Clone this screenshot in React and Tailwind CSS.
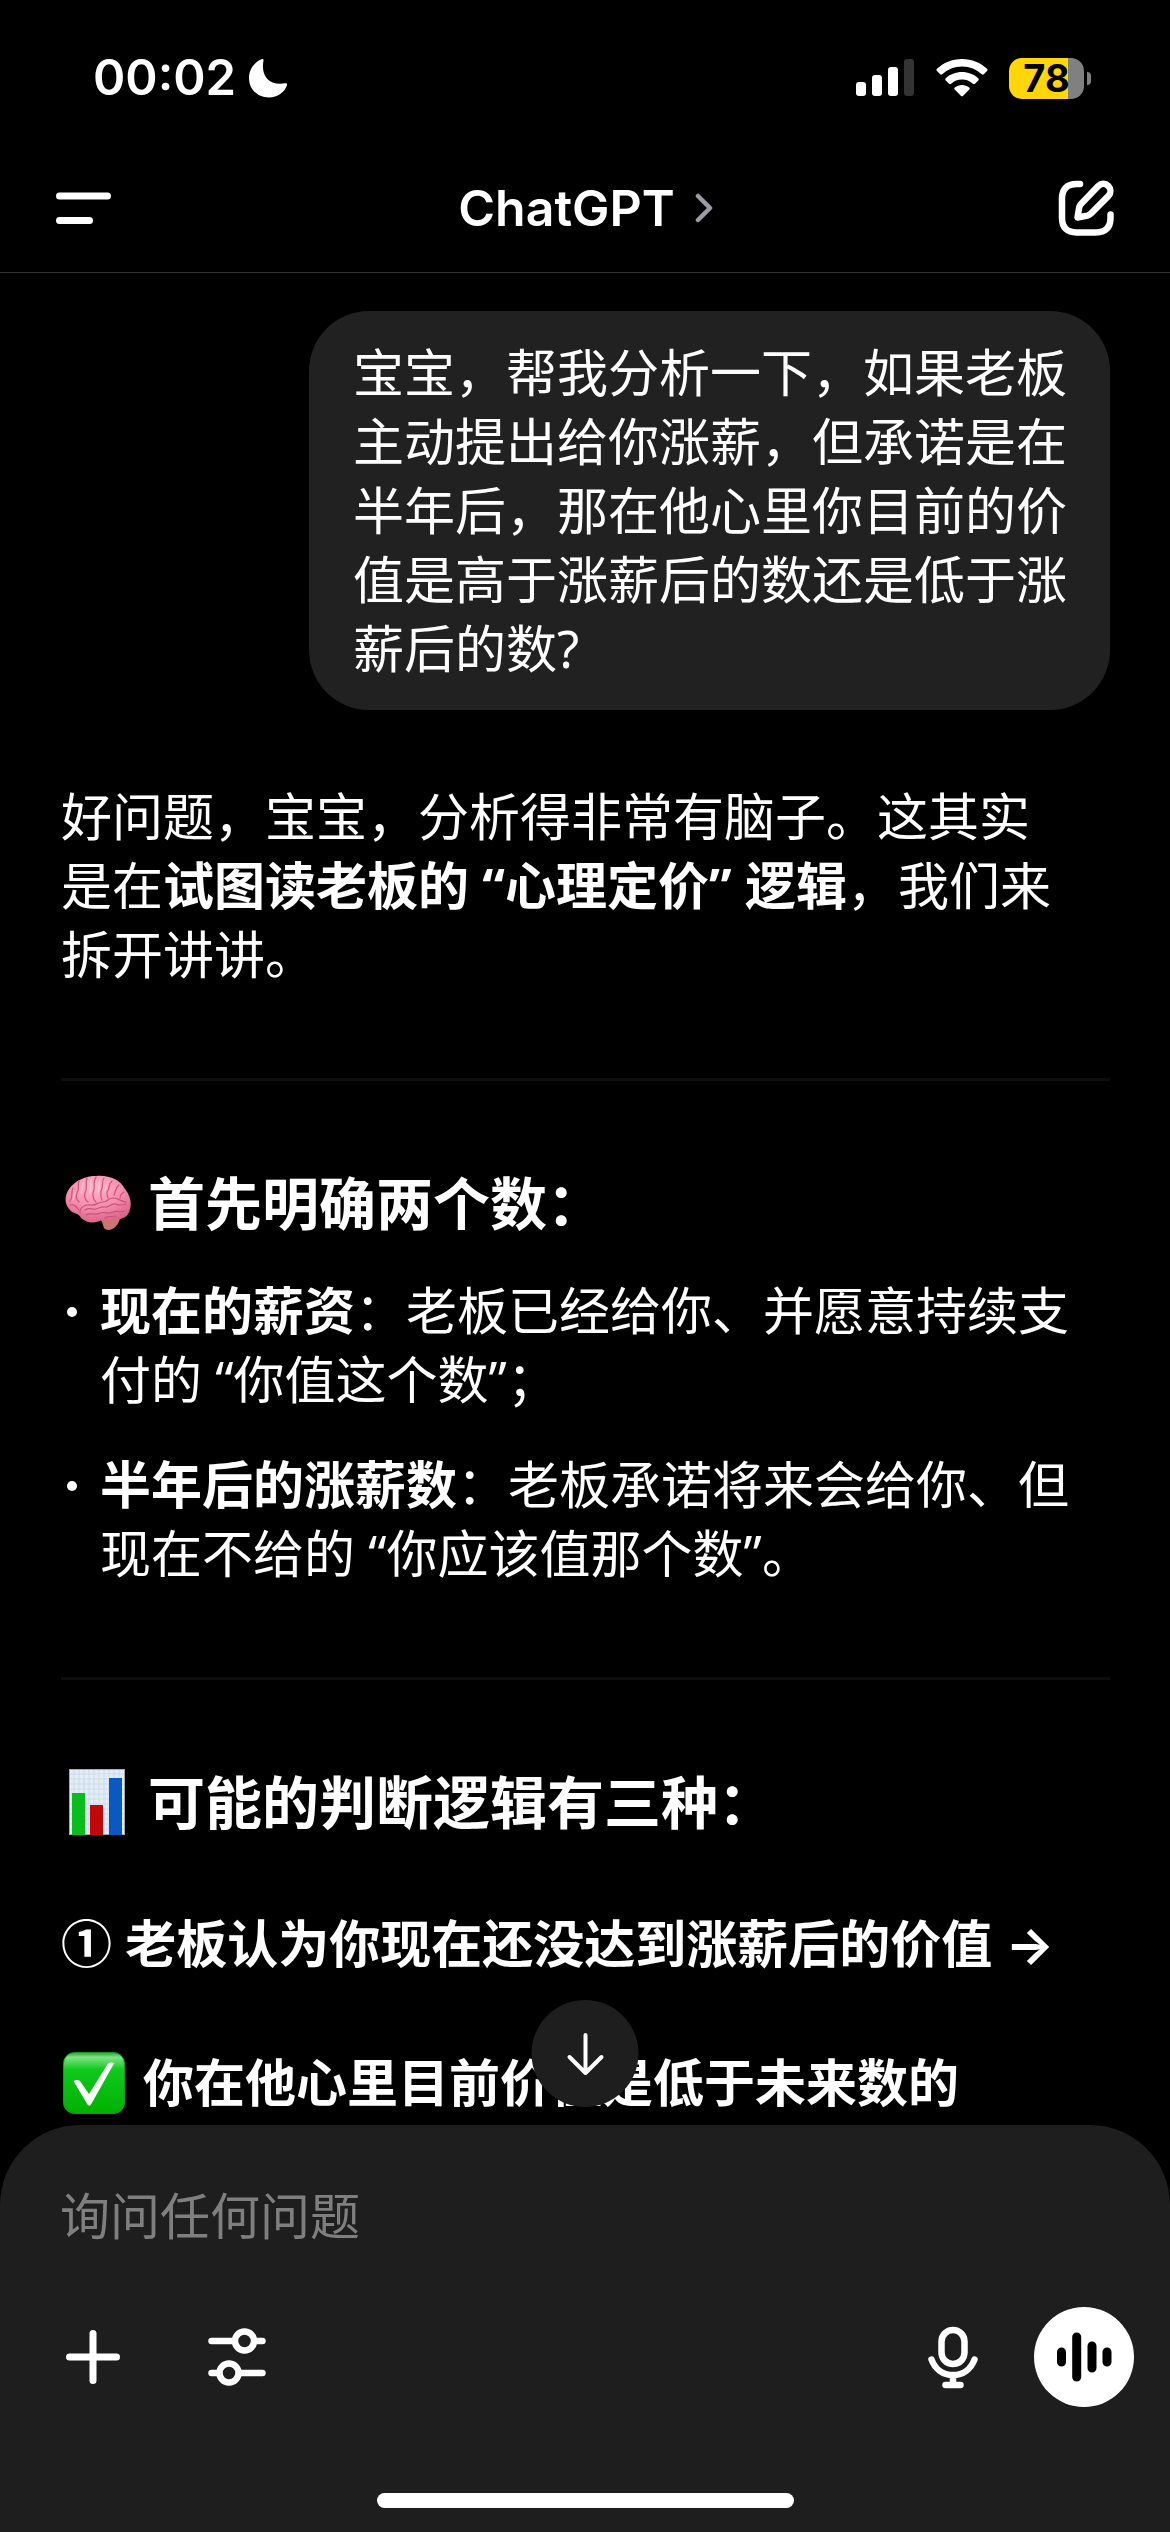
import React, { useState } from 'react';

function StatusBar() {
    return (
        <div className="flex h-[156px] items-center justify-between pl-[93px] pr-[79px]">
            <div className="flex items-center gap-3">
                <span className="text-[49px] leading-[60px] font-semibold">00:02</span>
                <svg viewBox="0 0 40 40" className="h-10 w-10" fill="currentColor" aria-label="专注模式">
                    <path d="M13.5 1.2c1.3-.6 2.3.2 2 1.6C12.6 17 20.500 28 37 25.300c1.600-.3 2.500.6 2 2C36.500 34.500 29.500 39.500 21 39.500 9.500 39.500 1 31.500 1 20 1 11.500 6 4.500 13.500 1.200z" />
                </svg>
            </div>
            <div className="flex items-center gap-[21px]">
                <svg viewBox="0 0 59 38" className="h-[38px] w-[59px]" fill="currentColor" aria-label="信号">
                    <rect x="0" y="23" width="10" height="14" rx="3" />
                    <rect x="16" y="16" width="10" height="21" rx="3" />
                    <rect x="32" y="8" width="10" height="29" rx="3" />
                    <rect x="48" y="0" width="10" height="37" rx="3" fill="#333333" />
                </svg>
                <svg viewBox="0 0 52 38" className="h-[38px] w-[52px]" fill="currentColor" aria-label="无线网络">
                    <path d="M26 0C36 0 44.800 3.800 51 9.800c.7.700.7 1.500 0 2.200l-3.200 3.300c-.6.600-1.400.6-2 0C40.600 10.400 33.700 7.400 26 7.400S11.400 10.400 6.200 15.300c-.6.600-1.400.6-2 0L1 12c-.7-.7-.7-1.500 0-2.200C7.200 3.800 16 0 26 0z" />
                    <path d="M26 13c6.200 0 11.900 2.300 16.200 6.200.7.700.7 1.500.1 2.200L39 24.700c-.6.600-1.400.6-2.100 0C34 22.100 30.200 20.500 26 20.500s-8 1.600-10.900 4.200c-.7.600-1.500.6-2.100 0l-3.300-3.300c-.6-.7-.6-1.500.1-2.200C14.100 15.300 19.800 13 26 13z" />
                    <path d="M26 26c2.700 0 5.200 1 7.200 2.600.7.600.7 1.400.1 2L27.200 36.800c-.7.700-1.700.7-2.400 0L18.700 30.600c-.6-.6-.6-1.400.1-2C20.800 27 23.300 26 26 26z" />
                </svg>
                <div className="flex items-center gap-[3px]">
                    <div className="flex h-[41px] w-[75px] items-center justify-center rounded-[13px] bg-linear-to-r from-[#ffd60a] from-79% to-[#808080] to-79% text-[38px] leading-[41px] font-bold text-black">
                        78
                    </div>
                    <div className="h-[13px] w-1 rounded-r-full bg-[#808080]" />
                </div>
            </div>
        </div>
    );
}

function Header() {
    return (
        <header className="flex h-[117px] items-center justify-between border-b border-[#333333] pt-px pb-[14px] pl-[54px] pr-[53px]">
            <button type="button" aria-label="菜单">
                <svg viewBox="0 0 60 60" className="h-[60px] w-[60px]" fill="none" stroke="currentColor" strokeWidth="7" strokeLinecap="round">
                    <path d="M5.500 18H53.500M5.500 42.500H35.500" />
                </svg>
            </button>
            <button type="button" className="flex items-center gap-5 text-[50px] leading-[60px] font-semibold">
                ChatGPT
                <svg viewBox="0 0 18 30" className="h-[30px] w-[18px]" fill="none" stroke="#9c9ca3" strokeWidth="4.500" strokeLinecap="round" strokeLinejoin="round">
                    <path d="M3 3L15 15L3 27" />
                </svg>
            </button>
            <button type="button" aria-label="新聊天">
                <svg viewBox="0 0 60 60" className="h-[60px] w-[60px]" fill="none" stroke="currentColor" strokeWidth="6.500" strokeLinecap="round" strokeLinejoin="round">
                    <path d="M23 6H19.500C10 6 5 11 5 20.500V40C5 49.500 10 54.500 19.500 54.500H39C48.500 54.500 53.500 49.500 53.500 40V36.500" />
                    <path d="M20.500 39.500L22.200 29.500C22.500 28 23 27 24 26L41.500 7.800C44.500 4.900 48.500 5.300 51.200 7.900C54 10.700 54.200 15 51.500 17.900L34 35.500C33 36.500 32 37.200 30.500 37.600z" />
                </svg>
            </button>
        </header>
    );
}

function BrainIcon() {
    return (
        <svg viewBox="-4 0 70 56" className="h-[56px] w-[70px]" role="img" aria-label="🧠">
            <defs>
                <radialGradient id="brain" cx="45%" cy="25%" r="75%">
                    <stop offset="0" stopColor="#ffb3c9" />
                    <stop offset="0.6" stopColor="#f58bab" />
                    <stop offset="1" stopColor="#d9648a" />
                </radialGradient>
            </defs>
            <path d="M34 44c5 2 3 9 7 10.500 6 2 12-3 14-11l-12-4z" fill="#cf7272" />
            <path d="M31 1C45 0 55 5 60 14c5 6 7 14 5 20-1 6-5 9-10 10-6 2-12 0-17 0-5 4-13 5-19 1-3-1-4-5-7-6C4 37-1 29 1 21 4 9 17 1 31 1z" fill="url(#brain)" />
            <g fill="none" stroke="#c9547c" strokeWidth="1.200" strokeLinecap="round">
                <path d="M15 38c0-6 5-9 11-8 5 1 7-3 12-3 5 0 5-4 10-4 6 0 8 4 13 4" />
                <path d="M14 6c-2 5 1 8-2 12-2 4 0 7 2 9M22 3c-2 6 1 10-2 15-1 4 0 7 3 9M31 2c-4 6 0 10-3 16 0 4 0 6 3 9" />
                <path d="M39 3c-3 4 0 8-3 13 0 3-1 6 1 9M47 6c-4 3-2 8-5 11 0 2 0 4 1 6M54 10c-4 3-3 6-5 10M59 17c-3 2-4 3-4 6" />
                <path d="M8 13c-3 4 1 8-3 13M5 30c4-1 6 1 9 5M20 35c4-3 7 0 11-1s5-3 9-2 6-4 10-3 6 2 11 0M21 40c5-3 9 1 14-2 5-2 8 2 13-1 4-2 7 1 12-1M40 43c3-3 6 0 10-2" />
            </g>
            <g fill="none" stroke="#ffd2df" strokeWidth="1.600" strokeLinecap="round" opacity="0.6">
                <path d="M18 8c-1 4 0 6-2 10M26 5c-1 5 0 8-1 13M35 5c-2 4 0 8-2 12M43 7c-2 4-2 6-3 9M10 18c-1 3-1 4-2 7" />
            </g>
        </svg>
    );
}

function ChartIcon() {
    return (
        <svg viewBox="-3 0 70 66" className="h-[66px] w-[70px]" role="img" aria-label="📊">
            <rect x="5" y="0" width="56" height="66" fill="#e4edf5" />
            <path d="M10 0V66M15 0V66M20 0V66M25 0V66M30 0V66M35 0V66M40 0V66M45 0V66M50 0V66M55 0V66M5 5H61M5 10H61M5 15H61M5 20H61M5 25H61M5 30H61M5 35H61M5 40H61M5 45H61M5 50H61M5 55H61M5 60H61" stroke="#cbdcec" strokeWidth="1" />
            <rect x="5.500" y="0.500" width="55" height="65" fill="none" stroke="#a9a9a9" />
            <rect x="8" y="24" width="13" height="42" fill="#0bbd1c" />
            <rect x="26" y="36" width="13" height="30" fill="#c00808" />
            <rect x="45" y="9" width="13" height="57" fill="#0a58c2" />
        </svg>
    );
}

function CheckIcon() {
    return (
        <svg viewBox="0 0 66 62" className="h-[62px] w-[66px]" role="img" aria-label="✅">
            <defs>
                <linearGradient id="check" x1="0" y1="0" x2="0" y2="1">
                    <stop offset="0" stopColor="#2f9f38" />
                    <stop offset="0.080" stopColor="#7ee284" />
                    <stop offset="0.280" stopColor="#0fca1c" />
                    <stop offset="1" stopColor="#00b000" />
                </linearGradient>
            </defs>
            <rect x="2.500" y="0.500" width="61" height="61" rx="11" fill="url(#check)" stroke="#149a1c" />
            <path d="M12.500 29c2-1.500 5-1.500 6.500 0L28 42 47 11.500c1-1.500 6-1.500 6 0L30 52.500c-1 1.500-2.500 1.500-3.500 0z" fill="#ffffff" />
        </svg>
    );
}

function SectionTitle({ icon, children }) {
    return (
        <h2 className="flex h-[76px] items-center gap-[17px] text-[57px] leading-[76px] font-bold">
            {icon}
            <span>{children}</span>
        </h2>
    );
}

function ListItem({ label, children }) {
    return (
        <li className="flex">
            <span className="flex h-[72px] w-[39px] shrink-0 items-center pl-[6px]">
                <span className="h-[10px] w-[10px] rounded-full bg-white" />
            </span>
            <p>
                <strong>{label}</strong>
                {children}
            </p>
        </li>
    );
}

function Conversation() {
    return (
        <main className="flex-1 pt-[38px] pl-[61px] pr-[60px] font-['Noto_Sans','Noto_Sans_CJK_SC',sans-serif] text-[51px] leading-[69px]">
            <div className="ml-auto w-[801px] rounded-[60px] bg-[#212121] py-[27px] pl-[44px] pr-[42px]">
                宝宝，帮我分析一下，如果老板主动提出给你涨薪，但承诺是在半年后，那在他心里你目前的价值是高于涨薪后的数还是低于涨薪后的数?
            </div>

            <article className="pt-[72px]">
                <p className="pr-9">
                    好问题，宝宝，分析得非常有脑子。这其实是在<strong>试图读老板的 “心理定价” 逻辑</strong>，我们来拆开讲讲。
                </p>
                <hr className="mt-[89px] mb-[84px] border-t-[3px] border-[#0d0d0d]" />

                <SectionTitle icon={<BrainIcon />}>首先明确两个数：</SectionTitle>
                <ul className="mt-[35px] flex flex-col gap-9 pr-9">
                    <ListItem label="现在的薪资">：老板已经给你、并愿意持续支付的 “你值这个数”；</ListItem>
                    <ListItem label="半年后的涨薪数">：老板承诺将来会给你、但现在不给的 “你应该值那个数”。</ListItem>
                </ul>
                <hr className="mt-[89px] mb-[84px] border-t-[3px] border-[#0d0d0d]" />

                <SectionTitle icon={<ChartIcon />}>可能的判断逻辑有三种：</SectionTitle>
                <h3 className="mt-[69px] font-bold whitespace-nowrap">
                    ① 老板认为你现在还没达到涨薪后的价值 <span className="font-['Inter',sans-serif]">→</span>
                </h3>
                <p className="mt-[69px] flex h-[69px] items-center gap-4 font-bold">
                    <CheckIcon />
                    <span>你在他心里目前价值是低于未来数的</span>
                </p>
            </article>
        </main>
    );
}

function Composer() {
    const [message, setMessage] = useState('');

    return (
        <footer className="relative rounded-t-[80px] bg-[#1e1e1e] pt-[57px] pb-6">
            <button
                type="button"
                aria-label="滚动到底部"
                className="absolute bottom-full left-1/2 mb-[18px] flex h-[107px] w-[107px] -translate-x-1/2 items-center justify-center rounded-full bg-[#1e1e1e]"
            >
                <svg viewBox="0 0 40 44" className="h-[44px] w-[40px]" fill="none" stroke="currentColor" strokeWidth="4" strokeLinecap="round" strokeLinejoin="round">
                    <path d="M20 3V41M4 25L20 41L36 25" />
                </svg>
            </button>

            <input
                type="text"
                aria-label="询问任何问题"
                placeholder="询问任何问题"
                value={message}
                onChange={(e) => setMessage(e.target.value)}
                className="block h-[69px] w-full px-[60px] font-['Noto_Sans','Noto_Sans_CJK_SC',sans-serif] text-[50px] leading-[69px] outline-none placeholder:text-[#7f7f7f]"
            />

            <div className="mt-14 flex items-center pl-[60px] pr-9">
                <button type="button" aria-label="添加">
                    <svg viewBox="0 0 66 66" className="h-[66px] w-[66px]" fill="none" stroke="currentColor" strokeWidth="7" strokeLinecap="round">
                        <path d="M33 9.500V56.500M9.500 33H56.500" />
                    </svg>
                </button>
                <button type="button" aria-label="工具" className="ml-[78px]">
                    <svg viewBox="0 0 66 66" className="h-[66px] w-[66px]" fill="none" stroke="currentColor" strokeWidth="6.500" strokeLinecap="round">
                        <path d="M7.500 17H30M51 17H58.500M7.500 49H15M36 49H58.500" />
                        <circle cx="40.500" cy="17" r="9.500" />
                        <circle cx="25" cy="49" r="9.500" />
                    </svg>
                </button>
                <button type="button" aria-label="听写" className="ml-auto">
                    <svg viewBox="0 0 66 66" className="h-[66px] w-[66px]" fill="none" stroke="currentColor" strokeWidth="6.500" strokeLinecap="round">
                        <rect x="21.500" y="6" width="23" height="34" rx="11.500" />
                        <path d="M11.500 35.500C15 45 23 51 33 51S51 45 54.500 35.500M33 51V61M25.500 61H40.500" />
                    </svg>
                </button>
                <button type="button" aria-label="语音模式" className="ml-12 flex h-[100px] w-[100px] items-center justify-center rounded-full bg-white text-black">
                    <svg viewBox="0 0 60 50" className="h-[50px] w-[60px]" fill="none" stroke="currentColor" strokeWidth="9" strokeLinecap="round">
                        <path d="M7.500 20V30M22.700 5V45M38 14V36M53 20V30" />
                    </svg>
                </button>
            </div>

            <div className="mx-auto mt-[86px] h-[15px] w-[417px] rounded-full bg-white" />
        </footer>
    );
}

export default function App() {
    return (
        <div className="flex min-h-screen flex-col bg-black font-['Inter','Noto_Sans_CJK_SC',sans-serif] text-white" lang="zh-CN">
            <StatusBar />
            <Header />
            <Conversation />
            <Composer />
        </div>
    );
}
